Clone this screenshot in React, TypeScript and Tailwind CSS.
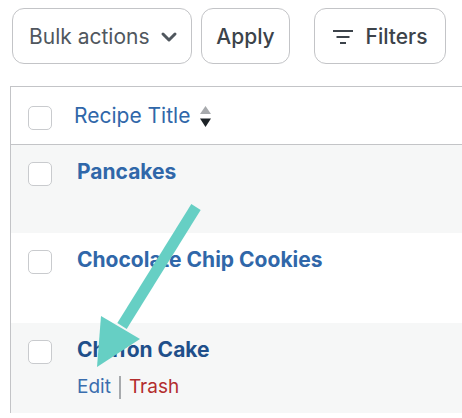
const rows = [
  { title: "Pancakes", height: "h-[88px]", bg: "bg-[#f6f7f7]", color: "text-[#3067a9]", actions: false },
  { title: "Chocolate Chip Cookies", height: "h-[90px]", bg: "bg-white", color: "text-[#3067a9]", actions: false },
  { title: "Chiffon Cake", height: "h-[90px]", bg: "bg-[#f6f7f7]", color: "text-[#1f4f8a]", actions: true },
];

function Checkbox() {
  return (
    <span className="block h-6 w-6 shrink-0 rounded-[5px] border border-[#c9cbce] bg-white" />
  );
}

function FilterIcon() {
  return (
    <svg width="20" height="14" viewBox="0 0 20 14" fill="none" stroke="#3c434a" strokeWidth="2">
      <line x1="0" y1="1" x2="20" y2="1" />
      <line x1="3.5" y1="7" x2="16.5" y2="7" />
      <line x1="7" y1="13" x2="13" y2="13" />
    </svg>
  );
}

function SortIcon() {
  return (
    <svg width="11" height="22" viewBox="0 0 11 22" className="ml-2.5 mt-[2px]">
      <polygon points="5.5,0 11,8 0,8" fill="#a7aaad" />
      <polygon points="0,12.5 11,12.5 5.5,21" fill="#1d2327" />
    </svg>
  );
}

export default function App() {
  return (
    <div className="relative h-[418px] w-[462px] overflow-hidden bg-white font-['Inter',sans-serif]">
      <div className="flex items-center px-3 pt-2">
        <button className="flex h-14 w-[180px] items-center justify-between rounded-xl border border-[#c3c4c7] bg-white pl-4 pr-3 pt-[2px] text-[21px] text-[#50575e]">
          <span>Bulk actions</span>
          <svg width="18" height="12" viewBox="0 0 18 12" fill="none" stroke="#50575e" strokeWidth="3" strokeLinecap="round" strokeLinejoin="round" className="mr-[1px]">
            <polyline points="3,3 9,9 15,3" />
          </svg>
        </button>
        <button className="ml-[9px] flex h-14 w-[89px] items-center justify-center rounded-xl border border-[#c3c4c7] bg-white pt-[2px] text-[21px] font-medium text-[#3c434a]">
          Apply
        </button>
        <button className="ml-6 flex h-14 w-[132px] items-center justify-center gap-[13px] rounded-xl border border-[#c3c4c7] bg-white pt-[2px] text-[21px] font-medium text-[#3c434a]">
          <FilterIcon />
          <span>Filters</span>
        </button>
      </div>

      <div className="ml-[10px] mt-[22px] w-[480px] border-l border-t border-[#c3c4c7]">
        <div className="flex h-[58px] items-start border-b border-[#c3c4c7] pl-[17px]">
          <div className="mt-[19px]">
            <Checkbox />
          </div>
          <div className="ml-[22px] mt-[15px] flex items-center">
            <span className="text-[21px] leading-7 text-[#3067a9]">Recipe Title</span>
            <SortIcon />
          </div>
        </div>
        {rows.map((row) => (
          <div key={row.title} className={`flex items-start pl-[17px] pt-[13px] ${row.height} ${row.bg}`}>
            <div className="mt-[4px]">
              <Checkbox />
            </div>
            <div className="ml-[25px] flex flex-col">
              <span className={`text-[21px] font-bold leading-7 ${row.color}`}>{row.title}</span>
              {row.actions && (
                <div className="mt-[11px] flex items-center text-[19px] leading-6">
                  <span className="text-[#3a6eae]">Edit</span>
                  <span className="mx-2 h-[23px] w-[2px] bg-[#a7aaad]" />
                  <span className="text-[#b32d2e]">Trash</span>
                </div>
              )}
            </div>
          </div>
        ))}
      </div>

      <svg className="pointer-events-none absolute left-0 top-0" width="462" height="418" viewBox="0 0 462 418">
        <line x1="196" y1="207" x2="122" y2="326" stroke="#66cfc4" strokeWidth="11" />
        <polygon points="97,367 101,316 140,339" fill="#66cfc4" />
      </svg>
    </div>
  );
}
